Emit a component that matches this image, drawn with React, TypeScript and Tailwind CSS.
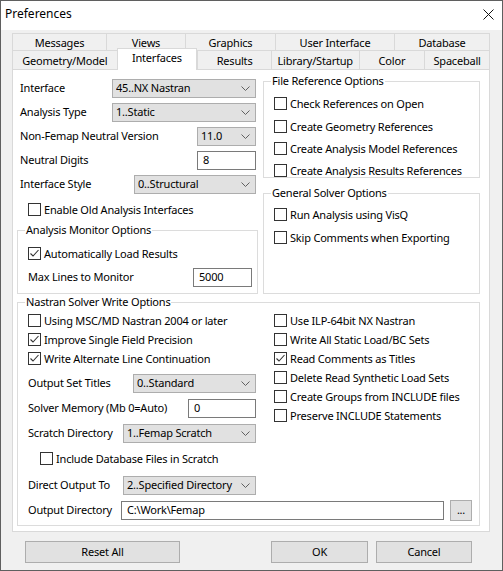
import React from 'react';

const topTabs = [
  { name: 'Messages', w: 'w-[94px]' },
  { name: 'Views', w: 'w-[79px]' },
  { name: 'Graphics', w: 'w-[90px]' },
  { name: 'User Interface', w: 'w-[119px]' },
  { name: 'Database', w: 'w-[96px]' },
];

const bottomTabs = [
  { name: 'Geometry/Model', w: 'w-[104px]' },
  { name: 'Interfaces', w: 'w-[81px]', active: true },
  { name: 'Results', w: 'w-[74px]' },
  { name: 'Library/Startup', w: 'w-[88px]' },
  { name: 'Color', w: 'w-[66px]' },
  { name: 'Spaceball', w: 'w-[65px]' },
];

function Check({ checked = false, label, className = '' }: { checked?: boolean; label: string; className?: string }) {
  return (
    <div className={`flex items-center h-[13px] whitespace-nowrap ${className}`}>
      <span className="w-[13px] h-[13px] shrink-0 border border-[#333333] bg-white flex items-center justify-center">
        {checked && (
          <svg width="11" height="11" viewBox="0 0 11 11">
            <path d="M1.5 5.5 L4 8 L9.5 2" fill="none" stroke="#333333" strokeWidth="1.1" />
          </svg>
        )}
      </span>
      <span className="ml-[3px] leading-[16px]">{label}</span>
    </div>
  );
}

function Combo({ value, w }: { value: string; w: string }) {
  return (
    <div className={`${w} h-[19px] shrink-0 bg-[#e1e1e1] border border-[#adadad] flex items-center pl-[3px] pr-[5px]`}>
      <span className="flex-1 whitespace-nowrap overflow-hidden">{value}</span>
      <svg width="9" height="6" viewBox="0 0 9 6" className="shrink-0">
        <path d="M0.5 0.5 L4.5 4.5 L8.5 0.5" fill="none" stroke="#606060" />
      </svg>
    </div>
  );
}

function Field({ value, w }: { value: string; w: string }) {
  return (
    <div className={`${w} h-[19px] shrink-0 bg-white border border-[#7a7a7a] flex items-center pl-[5px] whitespace-nowrap`}>
      {value}
    </div>
  );
}

function Row({ label, children, className = '' }: { label: string; children: React.ReactNode; className?: string }) {
  return (
    <div className={`flex items-center justify-between h-[19px] ${className}`}>
      <span className="whitespace-nowrap">{label}</span>
      {children}
    </div>
  );
}

function Legend({ children }: { children: React.ReactNode }) {
  return <legend className="-ml-[3px] px-[1px] leading-[14px]">{children}</legend>;
}

export default function App() {
  return (
    <div className="w-[503px] h-[571px] bg-[#f0f0f0] border border-[#5f5f5f] flex flex-col font-['Noto_Sans',sans-serif] text-[11px] tracking-[-0.2px] text-black select-none">
      {/* title bar */}
      <div className="h-[29px] shrink-0 bg-white flex items-center justify-between pl-[4px] pr-[8px] pb-[3px]">
        <span className="text-[12px] tracking-normal">Preferences</span>
        <svg width="11" height="11" viewBox="0 0 11 11">
          <path d="M0.5 0.5 L10.5 10.5 M10.5 0.5 L0.5 10.5" stroke="#111111" strokeWidth="1" />
        </svg>
      </div>

      {/* tabs + page */}
      <div className="pl-[11px] pt-[3px]">
        <div className="flex h-[17px]">
          {topTabs.map((t, i) => (
            <div
              key={t.name}
              className={`${t.w} border-t border-l border-[#d9d9d9] flex items-center justify-center pt-[2px] ${i === topTabs.length - 1 ? 'border-r' : ''}`}
            >
              {t.name}
            </div>
          ))}
        </div>
        <div className="flex items-end h-[19px] border-l border-r border-[#d9d9d9] w-[478px]">
          {bottomTabs.map((t, i) => (
            <div
              key={t.name}
              className={`${t.w} flex items-center justify-center border-t border-[#d9d9d9] ${i > 0 ? 'border-l' : ''} ${
                t.active ? 'h-[22px] bg-white relative top-[1px] z-10 border-r pb-[2px]' : 'h-[19px] pt-[2px]'
              }`}
            >
              {t.name}
            </div>
          ))}
        </div>

        <div className="w-[478px] h-[463px] bg-white border border-[#d9d9d9] pl-[4px] pr-[9px]">
          <div className="grid grid-cols-[241px_217px] gap-x-[5px]">
            {/* left column */}
            <div className="pt-[9px] flex flex-col">
              <Row label="Interface" className="pl-[3px] pr-[2px]">
                <Combo value="45..NX Nastran" w="w-[144px]" />
              </Row>
              <Row label="Analysis Type" className="pl-[3px] pr-[2px] mt-[5px]">
                <Combo value="1..Static" w="w-[144px]" />
              </Row>
              <Row label="Non-Femap Neutral Version" className="pl-[3px] pr-[2px] mt-[5px]">
                <Combo value="11.0" w="w-[59px]" />
              </Row>
              <Row label="Neutral Digits" className="pl-[3px] pr-[2px] mt-[5px]">
                <Field value="8" w="w-[59px]" />
              </Row>
              <Row label="Interface Style" className="pl-[3px] pr-[2px] mt-[5px]">
                <Combo value="0..Structural" w="w-[122px]" />
              </Row>
              <Check label="Enable Old Analysis Interfaces" className="mt-[9px] ml-[11px]" />
              <fieldset className="mt-[7px] border border-[#dcdcdc] pl-[10px] pr-[5px] pb-[6px]">
                <Legend>Analysis Monitor Options</Legend>
                <Check checked label="Automatically Load Results" className="mt-[10px]" />
                <Row label="Max Lines to Monitor" className="mt-[8px]">
                  <Field value="5000" w="w-[59px]" />
                </Row>
              </fieldset>
            </div>

            {/* right column */}
            <div className="pt-[4px] flex flex-col">
              <fieldset className="border border-[#dcdcdc] pl-[10px]">
                <Legend>File Reference Options</Legend>
                <Check label="Check References on Open" className="mt-[9px]" />
                <Check label="Create Geometry References" className="mt-[10px]" />
                <Check label="Create Analysis Model References" className="mt-[9px]" />
                <Check label="Create Analysis Results References" className="mt-[9px]" />
              </fieldset>
              <fieldset className="mt-[8px] flex-1 border border-[#dcdcdc] pl-[10px]">
                <Legend>General Solver Options</Legend>
                <Check label="Run Analysis using VisQ" className="mt-[8px]" />
                <Check label="Skip Comments when Exporting" className="mt-[10px]" />
              </fieldset>
            </div>
          </div>

          <fieldset className="mt-[1px] border border-[#dcdcdc] pl-[10px] pr-[7px] pb-[4px]">
            <Legend>Nastran Solver Write Options</Legend>
            <div className="grid grid-cols-[228px_1fr] gap-x-[18px] mt-[5px]">
              <div className="flex flex-col">
                <Check label="Using MSC/MD Nastran 2004 or later" />
                <Check checked label="Improve Single Field Precision" className="mt-[6px]" />
                <Check checked label="Write Alternate Line Continuation" className="mt-[6px]" />
                <Row label="Output Set Titles" className="mt-[9px]">
                  <Combo value="0..Standard" w="w-[123px]" />
                </Row>
                <Row label="Solver Memory (Mb 0=Auto)" className="mt-[6px]">
                  <Field value="0" w="w-[68px]" />
                </Row>
                <Row label="Scratch Directory" className="mt-[6px]">
                  <Combo value="1..Femap Scratch" w="w-[133px]" />
                </Row>
                <Check label="Include Database Files in Scratch" className="mt-[9px] ml-[12px]" />
                <Row label="Direct Output To" className="mt-[11px]">
                  <Combo value="2..Specified Directory" w="w-[133px]" />
                </Row>
              </div>
              <div className="flex flex-col">
                <Check label="Use ILP-64bit NX Nastran" />
                <Check label="Write All Static Load/BC Sets" className="mt-[6px]" />
                <Check checked label="Read Comments as Titles" className="mt-[6px]" />
                <Check label="Delete Read Synthetic Load Sets" className="mt-[6px]" />
                <Check label="Create Groups from INCLUDE files" className="mt-[6px]" />
                <Check label="Preserve INCLUDE Statements" className="mt-[6px]" />
              </div>
            </div>
            <div className="flex items-center h-[21px] mt-[5px]">
              <span className="w-[93px] whitespace-nowrap">Output Directory</span>
              <Field value={'C:\\Work\\Femap'} w="w-[323px]" />
              <button className="ml-[6px] w-[22px] h-[21px] bg-[#e1e1e1] border border-[#adadad] flex items-center justify-center leading-none pb-[2px]">
                ...
              </button>
            </div>
          </fieldset>
        </div>
      </div>

      {/* dialog buttons */}
      <div className="flex mt-[9px] pl-[24px] h-[22px]">
        <button className="w-[155px] h-[22px] bg-[#e1e1e1] border border-[#adadad]">Reset All</button>
        <button className="ml-[91px] w-[97px] h-[22px] bg-[#e1e1e1] border border-[#adadad]">OK</button>
        <button className="ml-[8px] w-[96px] h-[22px] bg-[#e1e1e1] border border-[#adadad]">Cancel</button>
      </div>
    </div>
  );
}
